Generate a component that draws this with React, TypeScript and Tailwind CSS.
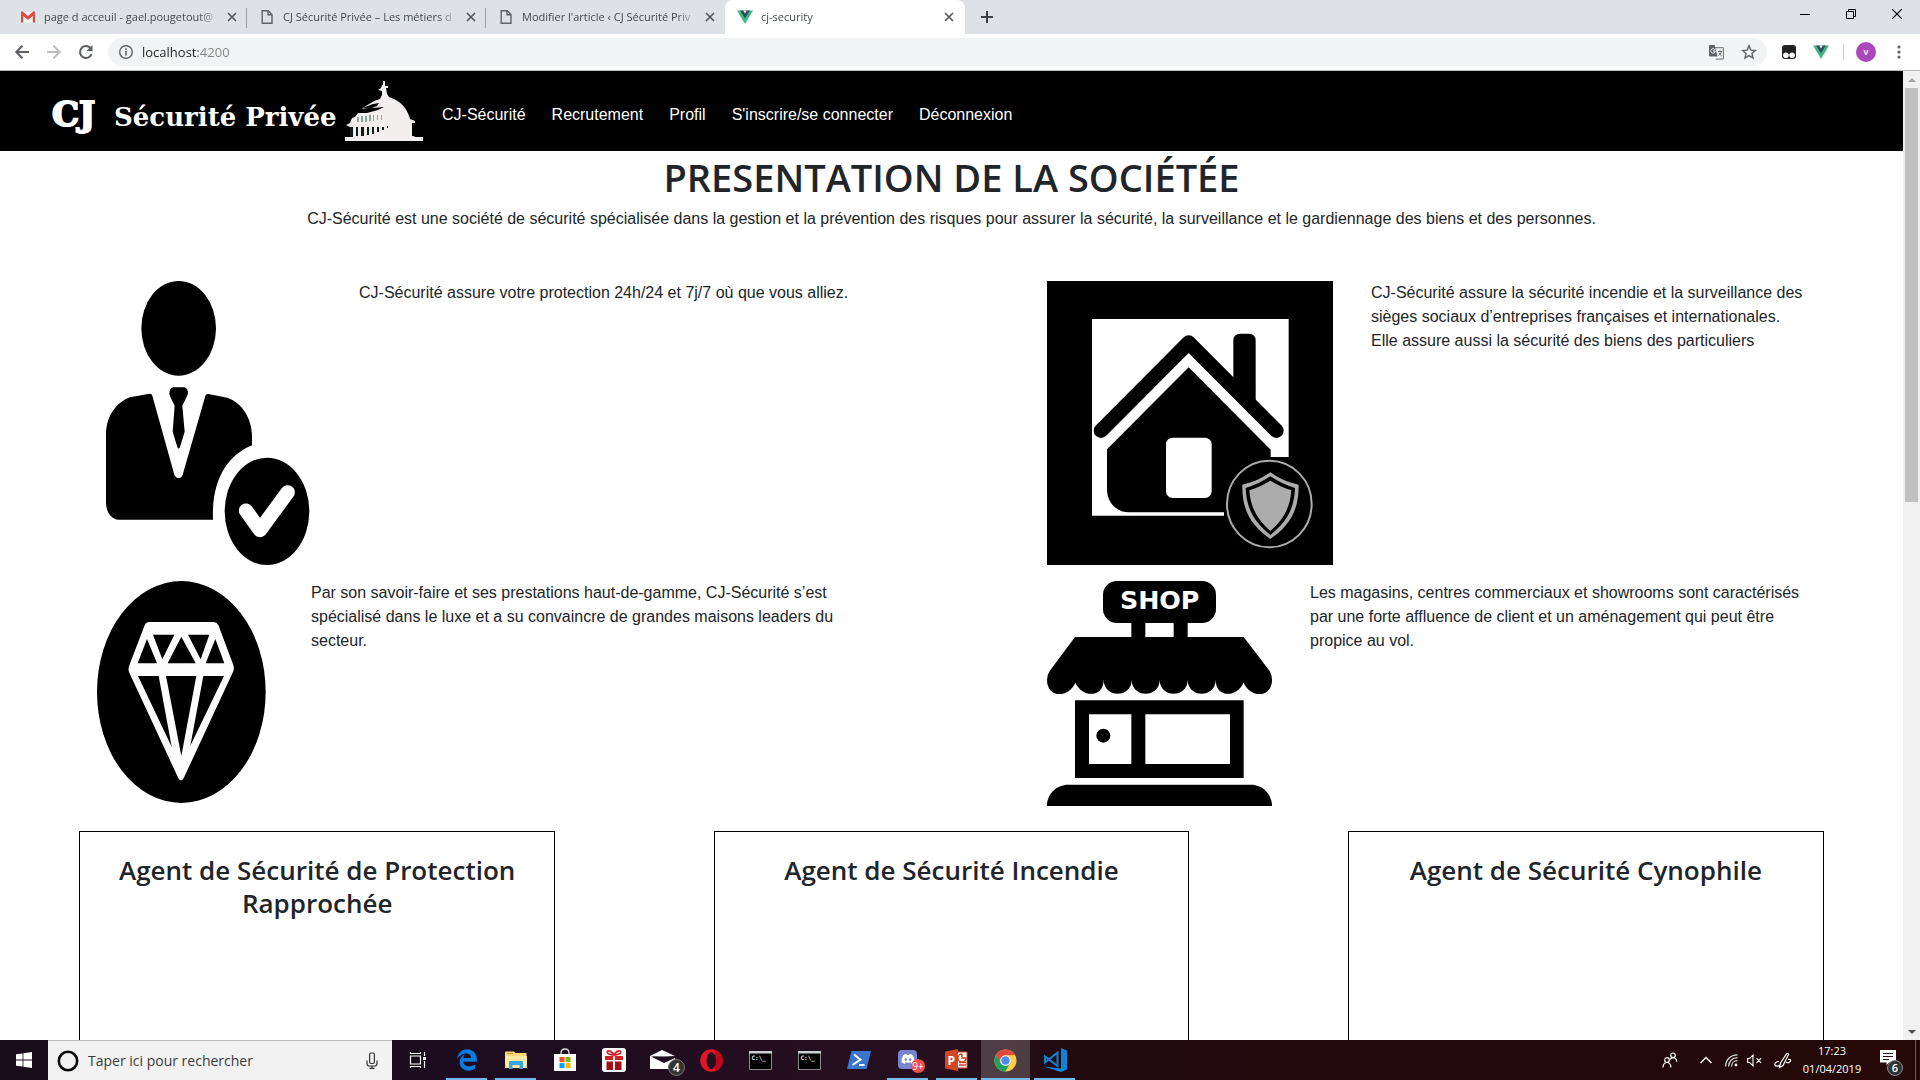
import type { ReactNode } from "react";
import { FaEdgeLegacy, FaDiscord } from "react-icons/fa6";

const UI = "font-['Open_Sans','Noto_Sans',sans-serif]";

/* ---------- Browser icons ---------- */

function GmailIcon() {
  return (
    <svg width="16" height="16" viewBox="0 0 16 16" className="shrink-0">
      <path d="M1 3h14v10.5H1z" fill="#efefef" />
      <path d="M1 13.5V4l7 5.5L15 4v9.5h-2.2V7L8 10.8 3.2 7v6.5z" fill="#d54c3f" />
      <path d="M1 2.6h1.6L8 7l5.4-4.4H15v2.2L8 10.2 1 4.8z" fill="#d54c3f" />
    </svg>
  );
}

function PageIcon() {
  return (
    <svg width="16" height="16" viewBox="0 0 16 16" fill="none" stroke="#5f6368" strokeWidth="1.4" className="shrink-0">
      <path d="M3.2 1.7h6l3.8 3.8v8.8H3.2z" />
      <path d="M9 1.7v4h4" />
    </svg>
  );
}

function VueIcon() {
  return (
    <svg width="16" height="16" viewBox="0 0 16 16" className="shrink-0">
      <path d="M0 1.5h16L8 15z" fill="#41b883" />
      <path d="M3.2 1.5h9.6L8 9.6z" fill="#35495e" />
      <path d="M6.2 1.5h3.6L8 4.6z" fill="#fff" />
    </svg>
  );
}

function CloseIcon() {
  return (
    <svg width="16" height="16" viewBox="0 0 16 16" stroke="#50545a" strokeWidth="1.6">
      <path d="M4 4l8 8M12 4l-8 8" />
    </svg>
  );
}

function Tab({ icon, title, active = false, divider = false }: { icon: ReactNode; title: string; active?: boolean; divider?: boolean }) {
  return (
    <div className={active ? "flex h-full w-60 items-center rounded-t-lg bg-white pr-1 pl-3" : "relative flex h-full w-[239px] items-center pr-[3px] pl-3"}>
      {icon}
      <button className="ml-2 min-w-0 flex-1 text-left text-[11px] leading-5 whitespace-nowrap text-[#45494d] [mask-image:linear-gradient(90deg,#000_88%,transparent)]">
        {title}
      </button>
      <button aria-label="Fermer l'onglet" className="flex size-6 items-center justify-center">
        <CloseIcon />
      </button>
      {divider && <span className="absolute top-2 right-0 h-5 w-px bg-[#9a9da1]" />}
    </div>
  );
}

function TabStrip() {
  return (
    <div className="flex h-[34px] shrink-0 bg-[#dee1e6] pl-2">
      <Tab icon={<GmailIcon />} title="page d acceuil - gael.pougetout@" divider />
      <Tab icon={<PageIcon />} title="CJ Sécurité Privée – Les métiers d" divider />
      <Tab icon={<PageIcon />} title="Modifier l'article ‹ CJ Sécurité Priv" />
      <Tab icon={<VueIcon />} title="cj-security" active />
      <button aria-label="Nouvel onglet" className="flex w-11 items-center justify-center">
        <svg width="14" height="14" viewBox="0 0 14 14" stroke="#3c4043" strokeWidth="2">
          <path d="M7 1v12M1 7h12" />
        </svg>
      </button>
      <div className="ml-auto flex h-7">
        <button aria-label="Réduire" className="flex w-[46px] items-center justify-center">
          <svg width="10" height="10" viewBox="0 0 10 10"><path d="M0 5.5h10" stroke="#000" /></svg>
        </button>
        <button aria-label="Restaurer" className="flex w-[46px] items-center justify-center">
          <svg width="10" height="10" viewBox="0 0 10 10" fill="none" stroke="#000"><path d="M.5 2.5h7v7h-7zM2.5 2.5v-2h7v7h-2" /></svg>
        </button>
        <button aria-label="Fermer" className="flex w-[46px] items-center justify-center">
          <svg width="10" height="10" viewBox="0 0 10 10" stroke="#000" strokeWidth="1.1"><path d="M0 0l10 10M10 0L0 10" /></svg>
        </button>
      </div>
    </div>
  );
}

function Toolbar() {
  return (
    <div className="flex h-[37px] shrink-0 items-center border-b border-[#b4b8b9] bg-white pr-[18px] pl-[14px]">
      <button aria-label="Précédent" className="size-4">
        <svg width="16" height="16" viewBox="0 0 16 16" fill="none" stroke="#5a5e63" strokeWidth="2"><path d="M15 8H2.5M8.5 1.8L2.3 8l6.2 6.2" /></svg>
      </button>
      <button aria-label="Suivant" className="ml-4 size-4">
        <svg width="16" height="16" viewBox="0 0 16 16" fill="none" stroke="#babcbe" strokeWidth="2"><path d="M1 8h12.5M7.5 1.8L13.7 8l-6.2 6.2" /></svg>
      </button>
      <button aria-label="Actualiser" className="ml-4 size-4">
        <svg width="16" height="16" viewBox="0 0 16 16" fill="none"><path d="M13.6 10.2A6 6 0 1 1 12.3 3.8" stroke="#5a5e63" strokeWidth="2" /><path d="M14.5 1v6h-6z" fill="#5a5e63" /></svg>
      </button>
      <div className="ml-[14px] flex h-7 flex-1 items-center rounded-full bg-[#f1f3f4] pr-[10px] pl-[10px]">
        <svg width="16" height="16" viewBox="0 0 16 16" fill="none" stroke="#5f6368" strokeWidth="1.4"><circle cx="8" cy="8" r="6.3" /><path d="M8 7v4.5M8 4.2v1.6" strokeWidth="1.6" /></svg>
        <input
          aria-label="Adresse"
          defaultValue="localhost:4200"
          className="ml-2 h-6 min-w-0 flex-1 bg-[linear-gradient(90deg,#202124_56px,#80868b_56px)] bg-clip-text text-[13px] text-transparent outline-none"
        />
        <button aria-label="Traduire cette page">
          <svg width="15" height="15" viewBox="0 0 15 15">
            <path d="M6 2.7h8.4v11.4H6.8" fill="none" stroke="#6a6d71" />
            <path d="M0 1a1 1 0 0 1 1-1h4.6l2.9 11.5H1a1 1 0 0 1-1-1z" fill="#5f6368" />
            <path d="M6 4.8A2.2 2.2 0 1 0 6.3 6H4.2" fill="none" stroke="#fff" />
            <path d="M9 6.5h4.2M11 5.4v1M12.4 6.6c-.4 1.8-1.6 3.3-3 4M9.8 7.8c.6 1.3 1.6 2.3 2.8 3" fill="none" stroke="#6a6d71" />
          </svg>
        </button>
        <button aria-label="Ajouter aux favoris" className="ml-[17px]">
          <svg width="16" height="16" viewBox="0 0 16 16" fill="none" stroke="#5f6368" strokeWidth="1.4"><path d="M8 1.9l1.8 4.2 4.6.4-3.5 3 1.1 4.5L8 11.6 4 14l1.1-4.5-3.5-3 4.6-.4z" /></svg>
        </button>
      </div>
      <button aria-label="Tampermonkey" className="ml-[15px]">
        <svg width="14" height="14" viewBox="0 0 14 14"><rect width="14" height="14" rx="3" fill="#222" /><circle cx="3.9" cy="10.3" r="2.8" fill="#fff" /><circle cx="10.1" cy="10.3" r="2.8" fill="#fff" /></svg>
      </button>
      <button aria-label="Vue.js devtools" className="ml-[17px]"><VueIcon /></button>
      <span className="ml-[14px] h-4 w-px bg-[#c8cacc]" />
      <button aria-label="Profil Chrome" className="ml-3 flex size-5 items-center justify-center rounded-full bg-[#ab47bc] text-[9px] font-semibold text-white">v</button>
      <button aria-label="Menu" className="ml-5">
        <svg width="6" height="14" viewBox="0 0 6 14" fill="#5f6368"><circle cx="3" cy="2" r="1.6" /><circle cx="3" cy="7" r="1.6" /><circle cx="3" cy="12" r="1.6" /></svg>
      </button>
    </div>
  );
}

/* ---------- Site ---------- */

function Dome() {
  return (
    <svg width="78" height="62" viewBox="0 0 78 62" fill="#f3efee">
      <path d="M38 1h2v5h3v2h-2l1 6 2 3 5 2c9 4 14 12 16 20l5 2v2h-3v12l3 2v1H5V47l-4-2 4-2 2-5 3-1 3-4h9l11-3 6-3-12 1-10 1c4-4 10-6 12-8l6-2 2-4v-4l-4-1 3-2 1-3h1z" />
      <path d="M0 57h78v4H0z" />
      <path d="M17 28l11-4 6-1-2 3-8 3z" fill="#000" />
      <path d="M12 42h2v-5h-2zM16 42h2v-6h-2zM20 42h2v-6h-2zM24 41h2v-6h-2zM28 41h1v-6h-1zM32 40h1v-5h-1zM36 40h1v-5h-1z" fill="#8fa0a0" />
      <path d="M5 47h3v10H5zM11 47h2v9h-2zM16 47h3v9h-3zM22 47h2v8h-2zM27 47h2v7h-2zM32 47h2v5h-2zM37 47h2v3h-2zM42 46h1v2h-1z" fill="#101c1c" />
      <path d="M67 46h2v10h-2z" fill="#000" />
    </svg>
  );
}

const links = ["CJ-Sécurité", "Recrutement", "Profil", "S'inscrire/se connecter", "Déconnexion"];

function Navbar() {
  return (
    <nav className="flex h-20 items-center bg-black pl-[52px] text-white">
      <a href="#accueil" className="flex items-center font-['DejaVu_Serif','Liberation_Serif',serif] font-bold whitespace-nowrap">
        <span className="flex w-[293px] items-baseline pt-2">
          <span className="w-[62px] text-[34px] leading-10 [-webkit-text-stroke:2px_white]">CJ</span>
          <span className="text-[26px] leading-10">Sécurité Privée</span>
        </span>
        <Dome />
      </a>
      <ul className="ml-[19px] flex gap-[26px] pt-2 text-base leading-6 whitespace-nowrap">
        {links.map((l) => (
          <li key={l}><a href={`#${l}`}>{l}</a></li>
        ))}
      </ul>
    </nav>
  );
}

function PersonArt() {
  return (
    <svg width="224" height="284" viewBox="51 33 672 852" className="shrink-0">
      <ellipse cx="296" cy="175" rx="112" ry="142" />
      <path d="M208 371q7-1 9 6l66 237q5 10 13 10t12-10l68-236q2-7 9-6l57 11c42 14 74 60 74 116v27c-70 28-122 100-117 223H116c-22 0-38-24-38-52V495c0-58 32-98 72-113z" />
      <path d="M280 352h33q11 4 11 17l-3 10-14 28 7 78-14 46q-4 9-8 0l-14-46 6-78-13-26-3-10q0-16 12-19z" />
      <ellipse cx="561" cy="724" rx="127" ry="161" />
      <path d="M498 722l42 58 83-113" fill="none" stroke="#fff" strokeWidth="43" strokeLinecap="round" strokeLinejoin="round" />
    </svg>
  );
}

function HouseArt() {
  return (
    <svg width="286" height="284" viewBox="51 33 858 852" className="shrink-0">
      <path d="M51 33h858v852H51z" />
      <path d="M186 147h590v414h-54v-22L476 292 231 538v120c0 40 28 69 66 69h285v10H186z" fill="#fff" />
      <path d="M213 482L476 218l263 264" fill="none" stroke="#000" strokeWidth="44" strokeLinecap="round" strokeLinejoin="round" />
      <path d="M610 340V212q0-21 21-21h25q21 0 21 21v180l-20 40z" />
      <rect x="408" y="503" width="137" height="181" rx="20" fill="#fff" />
      <ellipse cx="718" cy="702" rx="127" ry="130" fill="none" stroke="#acacac" strokeWidth="6" />
      <path d="M721 607c24 17 51 30 85 37 1 70-22 120-85 163-62-43-86-93-84-163 33-7 60-20 84-37z" fill="#acacac" />
      <path d="M721 619c22 15 48 28 74 35-2 58-22 100-74 141-51-41-72-83-74-141 26-7 52-20 74-35z" fill="#000" />
      <path d="M721 632c19 12 42 22 63 29-3 49-22 87-63 122-40-35-60-73-63-122 21-7 44-17 63-29z" fill="#acacac" />
    </svg>
  );
}

function DiamondArt() {
  return (
    <svg width="176" height="222" viewBox="51 33 528 666" className="shrink-0">
      <ellipse cx="304" cy="366" rx="253" ry="333" />
      <path d="M207 156h194q9 0 14 9l45 120q3 10 0 19L314 618q-11 26-22 0L148 308q-5-10 0-22l46-120q5-10 13-10z" fill="#fdfdfd" />
      <path d="M201 207l-28 73h58zM219 194h64l-36 74zM304 200l-41 80h84zM324 194h64l-26 74zM406 207l-29 73h56zM174 318h62l39 212zM258 318h91l-45 240zM370 318h62L331 527z" />
    </svg>
  );
}

function ShopArt() {
  return (
    <svg width="225" height="225" viewBox="51 33 675 675" className="shrink-0">
      <rect x="219" y="33" width="339" height="126" rx="42" />
      <path d="M304 150h42v60h-42zM431 150h42v60h-42zM135 201h506l78 102q7 12 7 26c0 56-64 56-85 9-21 46-84 46-84-9 0 56-84 56-84 0 0 56-84 56-84 0 0 56-84 56-84 0 0 56-84 56-84 0 0 55-64 55-85 9-21 47-85 47-85-9q0-14 8-26z" />
      <path fillRule="evenodd" d="M135 391h506v233H135zM177 433v149h127V433zM346 433v149h254V433zM51 708c0-36 28-64 64-64h547c36 0 64 28 64 64z" />
      <circle cx="220" cy="497" r="21" />
      <text x="389" y="118" textAnchor="middle" fill="#fff" fontFamily="DejaVu Sans" fontWeight="700" fontSize="76">SHOP</text>
    </svg>
  );
}

function Feature({ art, children }: { art: ReactNode; children: ReactNode }) {
  return (
    <article className="flex items-start gap-[38px] px-24">
      {art}
      <p className="min-w-0">{children}</p>
    </article>
  );
}

function Card({ title }: { title: string }) {
  return (
    <article className={`mx-auto h-[500px] w-3/4 border border-black px-5 pt-[22px] text-center ${UI}`}>
      <h2 className="text-[26px] leading-[33px] font-semibold">{title}</h2>
    </article>
  );
}

function Site() {
  return (
    <div className="min-w-0 flex-1 overflow-hidden bg-white font-['Liberation_Sans',Arial,sans-serif] text-base leading-6 text-[#212529]">
      <Navbar />
      <main>
        <h1 className={`mb-1.5 pt-0.5 text-center text-[38px] leading-[48px] font-semibold ${UI}`}>PRESENTATION DE LA SOCIÉTÉE</h1>
        <p className="text-center">
          CJ-Sécurité est une société de sécurité spécialisée dans la gestion et la prévention des risques pour assurer la sécurité, la surveillance et le gardiennage des biens et des personnes.
        </p>
        <section className="mt-[50px] grid grid-cols-2 gap-y-4 pr-0.5 pl-px">
          <Feature art={<PersonArt />}>CJ-Sécurité assure votre protection 24h/24 et 7j/7 où que vous alliez.</Feature>
          <Feature art={<HouseArt />}>
            CJ-Sécurité assure la sécurité incendie et la surveillance des sièges sociaux d’entreprises françaises et internationales. Elle assure aussi la sécurité des biens des particuliers
          </Feature>
          <Feature art={<DiamondArt />}>
            Par son savoir-faire et ses prestations haut-de-gamme, CJ-Sécurité s’est spécialisé dans le luxe et a su convaincre de grandes maisons leaders du secteur.
          </Feature>
          <Feature art={<ShopArt />}>
            Les magasins, centres commerciaux et showrooms sont caractérisés par une forte affluence de client et un aménagement qui peut être propice au vol.
          </Feature>
        </section>
        <section className="mt-[25px] grid grid-cols-3">
          <Card title="Agent de Sécurité de Protection Rapprochée" />
          <Card title="Agent de Sécurité Incendie" />
          <Card title="Agent de Sécurité Cynophile" />
        </section>
      </main>
    </div>
  );
}

function Scrollbar() {
  return (
    <div className="flex w-[17px] shrink-0 flex-col items-center bg-[#f1f1f1]">
      <button aria-label="Défiler vers le haut" className="flex h-[17px] items-center">
        <svg width="8" height="4" viewBox="0 0 8 4"><path d="M4 0l4 4H0z" fill="#a3a3a3" /></svg>
      </button>
      <div className="h-[414px] w-[13px] bg-[#c1c1c1]" />
      <button aria-label="Défiler vers le bas" className="mt-auto flex h-[17px] items-center">
        <svg width="8" height="4" viewBox="0 0 8 4"><path d="M0 0h8L4 4z" fill="#505050" /></svg>
      </button>
    </div>
  );
}

/* ---------- Taskbar ---------- */

function TaskItem({ label, children, running = false, active = false }: { label: string; children: ReactNode; running?: boolean; active?: boolean }) {
  return (
    <button aria-label={label} className={active ? "relative flex h-10 w-[49px] items-center justify-center bg-white/20" : "relative flex h-10 w-[49px] items-center justify-center"}>
      {children}
      {running && <span className={active ? "absolute inset-x-0 bottom-0 h-0.5 bg-[#76b9ed]" : "absolute inset-x-1 bottom-0 h-0.5 bg-[#76b9ed]"} />}
    </button>
  );
}

function CmdIcon() {
  return (
    <svg width="23" height="19" viewBox="0 0 23 19">
      <path d="M.5.5h22v18H.5z" fill="#000" stroke="#8a8a8a" />
      <path d="M0 0h23v2.5H0z" fill="#c9d0d3" />
      <text x="2.5" y="9" fill="#e8e8e8" fontFamily="DejaVu Sans Mono" fontWeight="700" fontSize="6">C:\_</text>
    </svg>
  );
}

function Taskbar() {
  return (
    <footer className="flex h-10 shrink-0 bg-[linear-gradient(90deg,#190a1c_0%,#1e0c20_30%,#26101f_48%,#210a0f_56%,#240807_100%)] text-white">
      <button aria-label="Démarrer" className="flex w-12 items-center justify-center">
        <svg width="16" height="16" viewBox="0 0 16 16" fill="#fff"><path d="M0 2.3l6.6-.9v6.2H0zM7.4 1.3L16 0v7.6H7.4zM0 8.4h6.6v6.2L0 13.7zM7.4 8.4H16V16l-8.6-1.2z" /></svg>
      </button>
      <label className="flex w-[344px] items-center border-t border-[#bdbdbd] bg-[#f2f2f2] pr-3 pl-[9px]">
        <svg width="22" height="22" viewBox="0 0 22 22"><circle cx="11" cy="11" r="9.2" fill="none" stroke="#0a0a0a" strokeWidth="2.6" /></svg>
        <input aria-label="Rechercher" placeholder="Taper ici pour rechercher" className="ml-[9px] min-w-0 flex-1 text-[14px] outline-none placeholder:text-[#3b3b3b]" />
        <svg width="16" height="18" viewBox="0 0 16 18" fill="none" stroke="#333" strokeWidth="1.2"><rect x="5.6" y="1" width="4.800" height="10.500" rx="1.500" /><path d="M3 8.500v3q0 2.500 2.500 2.500h5q2.500 0 2.500-2.500v-3M8 14v2.400M5.500 16.400h5" /></svg>
      </label>
      <div className="ml-px flex">
        <TaskItem label="Affichage des tâches">
          <svg width="18" height="18" viewBox="0 0 18 18" fill="none" stroke="#fff" strokeWidth="1.2"><path d="M1.500 5h10v8h-10zM1.500 3V1M11.500 3V1M1.500 2.500h10M1.500 15v2M11.500 15v2M1.500 15.500h10M15.500 1v4M15.500 10v7" /><path d="M14 6h3v3h-3z" fill="#fff" stroke="none" /></svg>
        </TaskItem>
        <TaskItem label="Microsoft Edge" running><FaEdgeLegacy size={22} color="#0a7bdc" /></TaskItem>
        <TaskItem label="Explorateur de fichiers" running>
          <svg width="22" height="19" viewBox="0 0 22 19">
            <path d="M0 1.500Q0 .5 1 .5h8l1.500 1.500h11V17H0z" fill="#fbd775" /><path d="M2 2.500h6" stroke="#c99b2f" /><path d="M0 5h22v12H0z" fill="#ffe9a2" />
            <path d="M4 18v-7q0-1 1-1h12q1 0 1 1v7h-3.500v-4h-7v4z" fill="#33a8e0" />
          </svg>
        </TaskItem>
        <TaskItem label="Microsoft Store">
          <svg width="24" height="24" viewBox="0 0 24 24">
            <path d="M8 7V5q0-4 4-4t4 4v2" fill="none" stroke="#ddd" strokeWidth="1.300" /><path d="M1 6h22v17H1z" fill="#fff" />
            <path d="M6.500 9h5v5h-5z" fill="#f25022" /><path d="M12.500 9h5v5h-5z" fill="#7fba00" /><path d="M6.500 15h5v5h-5z" fill="#00a4ef" /><path d="M12.500 15h5v5h-5z" fill="#ffb900" />
          </svg>
        </TaskItem>
        <TaskItem label="Cadeaux">
          <svg width="24" height="24" viewBox="0 0 24 24">
            <rect width="24" height="24" rx="3" fill="#fff" /><path d="M3 8h8v4H3zM13 8h8v4h-8z" fill="#d31f26" /><path d="M4.500 13.500H11V22H4.500zM13 13.500h6.500V22H13z" fill="#a80f15" />
            <path d="M12 7C8 7 4.500 5.500 5.500 3.500S10.500 4 12 7c1.500-3 5.500-5.500 6.500-3.500S16 7 12 7z" fill="none" stroke="#d31f26" strokeWidth="1.800" />
          </svg>
        </TaskItem>
        <TaskItem label="Courrier">
          <svg width="26" height="20" viewBox="0 0 26 20" fill="#fff"><path d="M0 6l12-6 13 6-11 1-13-.5 13 6.500L25 8v11H0z" /><path d="M2 6.500h22l-7 5z" fill="#1e0c20" /></svg>
          <span className="absolute right-0.5 bottom-1 flex size-[17px] items-center justify-center rounded-full border border-[#777] bg-[#333] text-[12px] font-semibold">4</span>
        </TaskItem>
        <TaskItem label="Opera">
          <svg width="23" height="23" viewBox="0 0 23 23"><ellipse cx="11.500" cy="11.500" rx="11.300" ry="11.300" fill="#e01525" /><path d="M15 .8a11 11 0 0 1 0 21.400z" fill="#a70014" opacity=".6" /><ellipse cx="11.300" cy="11.500" rx="4.700" ry="8.600" fill="#210e22" /></svg>
        </TaskItem>
        <TaskItem label="Invite de commandes 1"><CmdIcon /></TaskItem>
        <TaskItem label="Invite de commandes 2"><CmdIcon /></TaskItem>
        <TaskItem label="PowerShell">
          <svg width="24" height="18" viewBox="0 0 24 18"><path d="M4.500 0H24l-4.500 18H0z" fill="#3a76cf" /><path d="M7 3.500l6.500 5.200L5.500 14M12 14h5.500" fill="none" stroke="#fff" strokeWidth="2" /></svg>
        </TaskItem>
        <TaskItem label="Discord" running>
          <span className="mb-0.5 flex size-[19px] items-center justify-center rounded-sm bg-[#7785cc]"><FaDiscord size={14} /></span>
          <span className="absolute right-[7px] bottom-[7px] flex size-[14px] items-center justify-center rounded-full bg-[#f04f4f] text-[10px]">9+</span>
        </TaskItem>
        <TaskItem label="PowerPoint" running>
          <svg width="23" height="22" viewBox="0 0 23 22">
            <path d="M11 3h11v16H11z" fill="#fff" stroke="#d24726" /><path d="M17 5v4h4a4 4 0 1 1-4-4M14 13.500h7M14 16h7" fill="none" stroke="#d24726" strokeWidth="1.500" /><path d="M0 2.500L13 0v22L0 19.500z" fill="#d24726" />
            <text x="2.500" y="15.500" fill="#fff" fontFamily="Open Sans" fontWeight="700" fontSize="12">P</text>
          </svg>
        </TaskItem>
        <TaskItem label="Google Chrome" running active>
          <svg width="23" height="23" viewBox="0 0 24 24">
            <circle cx="12" cy="12" r="11.500" fill="#ffcd46" />
            <path d="M2.040 6.250A11.500 11.500 0 0 1 21.960 6.250L12 6.500 7.200 14.700z" fill="#df4a3c" />
            <path d="M2.040 6.250A11.500 11.500 0 0 0 12 23.500L16.800 14.700 12 17.500 7.200 14.700z" fill="#1da261" />
            <circle cx="12" cy="12" r="5.500" fill="#fff" /><circle cx="12" cy="12" r="4.400" fill="#4a8af4" />
          </svg>
        </TaskItem>
        <TaskItem label="Visual Studio Code" running>
          <svg width="24" height="24" viewBox="0 0 24 24" fill="#0b84d4"><path d="M18 0l6 2.500v19L18 24 .5 18.500 18 20.500z" /><path d="M14.500 4.500V18L2 8.500v6z" fill="none" stroke="#0b84d4" strokeWidth="2" /></svg>
        </TaskItem>
      </div>
      <div className="ml-auto flex items-center">
        <button aria-label="Contacts">
          <svg width="16" height="16" viewBox="0 0 16 16" fill="none" stroke="#fff" strokeWidth="1.200"><circle cx="5" cy="8" r="2.300" /><path d="M1 15.500c.3-3.500 2-5 4-5s3.700 1.500 4 5" /><circle cx="11" cy="3.300" r="2.300" /><path d="M8 7.500c.8-1.300 1.800-1.800 3-1.800 2 0 3.400 1.300 3.800 4" /></svg>
        </button>
        <button aria-label="Icônes cachées" className="ml-[22px]">
          <svg width="12" height="8" viewBox="0 0 12 8" fill="none" stroke="#fff" strokeWidth="1.300"><path d="M.5 7L6 1.500 11.500 7" /></svg>
        </button>
        <button aria-label="Réseau" className="ml-[13px]">
          <svg width="13" height="13" viewBox="0 0 13 13" fill="none" stroke="#ddd" strokeWidth="1.200"><path d="M.6 12.500C.6 6 5.500.9 12.500.9M3.600 12.500c0-5 3.600-8.800 8.900-8.800M6.600 12.500c0-3.200 2.300-5.800 5.900-5.800" /><circle cx="11" cy="11" r="1.400" fill="#fff" stroke="none" /></svg>
        </button>
        <button aria-label="Volume" className="ml-[9px]">
          <svg width="15" height="13" viewBox="0 0 15 13" fill="none" stroke="#fff" strokeWidth="1.100"><path d="M.6 4.500h2L6 1.200v10.600L2.600 8.500h-2zM9.500 4.200l4.600 4.600M14.100 4.200L9.500 8.800" /></svg>
        </button>
        <button aria-label="Windows Ink" className="ml-3">
          <svg width="18" height="17" viewBox="0 0 18 17" fill="none" stroke="#fff" strokeWidth="1.200"><path d="M5.500 15.500l1-4.500 6-9q1.500-1.500 2 .5L9 13.500zM5 9.500c-3 0-4.500 2-4 3.500s3.500 1.500 5 0M12 10c1.500 1.500 4 .5 4.500-1s-1-2-2.500-1.500" /></svg>
        </button>
        <div className="ml-1 w-[72px] text-center text-[11px] leading-[18px]">
          <div>17:23</div>
          <div>01/04/2019</div>
        </div>
        <button aria-label="Notifications" className="relative ml-3 h-10 w-[27px]">
          <svg width="16" height="16" viewBox="0 0 16 16" className="mb-1"><path d="M0 0h16v12.500H9L6.500 15v-2.500H0z" fill="#fff" /><path d="M3 3.500h10M3 6.500h10M3 9.500h6" stroke="#240807" /></svg>
          <span className="absolute right-1 bottom-1 flex size-4 items-center justify-center rounded-full border border-[#888] bg-[#333] text-[11px] font-semibold">6</span>
        </button>
        <span className="ml-2 mr-1 h-10 w-px bg-[#7a5a5a]" />
      </div>
    </footer>
  );
}

export default function App() {
  return (
    <div className={`flex h-screen flex-col overflow-hidden ${UI}`}>
      <TabStrip />
      <Toolbar />
      <div className="flex min-h-0 flex-1">
        <Site />
        <Scrollbar />
      </div>
      <Taskbar />
    </div>
  );
}
